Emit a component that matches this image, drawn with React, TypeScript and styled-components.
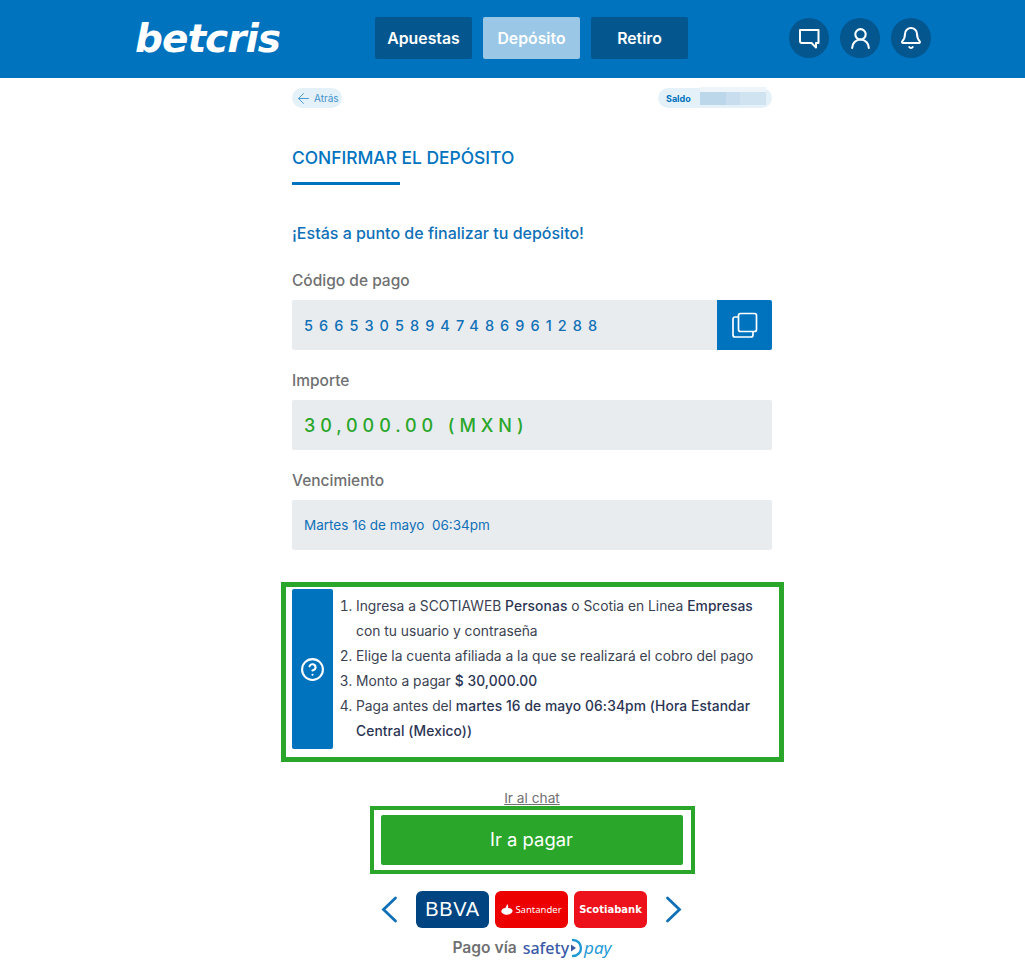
import React from "react";
import styled, { createGlobalStyle } from "styled-components";
import { ArrowLeft, CircleHelp, Bell, UserRound } from "lucide-react";

const GlobalStyle = createGlobalStyle`
  html, body { margin: 0; padding: 0; background: #fff; }
  body { font-family: Inter, "Noto Sans", sans-serif; color: #2b3553; }
`;

const Header = styled.header`
  height: 78px;
  box-sizing: border-box;
  padding-bottom: 2px;
  background: #0073bf;
  display: grid;
  grid-template-columns: 375px 313px 1fr;
  align-items: center;
`;

const Logo = styled.div`
  justify-self: end;
  margin-right: 95px;
  color: #fff;
  font-family: "DejaVu Sans", sans-serif;
  font-size: 39px;
  font-weight: 700;
  font-style: italic;
  letter-spacing: -1px;
  line-height: 1;
`;

const Nav = styled.nav`
  display: flex;
  gap: 11px;
`;

const NavButton = styled.button<{ $active?: boolean }>`
  width: 97px;
  height: 42px;
  border: 0;
  border-radius: 2px;
  background: ${(p) => (p.$active ? "#99c7e5" : "#04568f")};
  color: #fff;
  font: 600 15.8px Inter, sans-serif;
  padding: 0;
`;

const HeaderIcons = styled.div`
  display: flex;
  gap: 11px;
  margin-left: 101px;
`;

const Round = styled.div`
  width: 40px;
  height: 40px;
  border-radius: 50%;
  background: #04568f;
  color: #fff;
  display: flex;
  align-items: center;
  justify-content: center;
`;

const Main = styled.main`
  width: 480px;
  margin: 0 auto 0 292px;
  display: flex;
  flex-direction: column;
`;

const TopRow = styled.div`
  display: flex;
  justify-content: space-between;
  margin-top: 10px;
`;

const Pill = styled.div`
  height: 20px;
  border-radius: 10px;
  background: #e5f1f9;
  display: flex;
  align-items: center;
`;

const BackPill = styled(Pill)`
  width: 50px;
  padding-left: 3px;
  box-sizing: border-box;
  gap: 2px;
  font-size: 10px;
  color: #3d93cd;
`;

const SaldoPill = styled(Pill)`
  width: 114px;
  padding-left: 8px;
  box-sizing: border-box;
  gap: 9px;
  font-size: 9px;
  color: #0073bf;
  font-weight: 700;
`;

const Blur = styled.div`
  width: 66px;
  height: 13px;
  background: linear-gradient(90deg, #bcd6ea 0 40%, #c8deee 40% 60%, #d0e3f1 60%);
  box-shadow: 0 -5px 0 #eef5fa;
`;

const Title = styled.h1`
  margin: 40px 0 0;
  font-size: 17.4px;
  line-height: 20px;
  font-weight: 500;
  color: #0073bf;
`;

const TitleRule = styled.div`
  width: 108px;
  height: 3px;
  margin-top: 14px;
  background: #0073bf;
`;

const Intro = styled.p`
  margin: 38px 0 0;
  font-size: 16px;
  line-height: 20px;
  font-weight: 500;
  color: #0f70b7;
`;

const Label = styled.div<{ $first?: boolean }>`
  margin-top: ${(p) => (p.$first ? 28 : 21)}px;
  font-size: 15.5px;
  line-height: 20px;
  font-weight: 500;
  color: #6f7072;
`;

const Field = styled.div`
  margin-top: 9px;
  height: 50px;
  border-radius: 2px;
  background: #e9ecef;
  display: flex;
  align-items: center;
  justify-content: space-between;
  padding-left: 12px;
  overflow: hidden;
`;

const Code = styled.span`
  font-size: 14.5px;
  font-weight: 500;
  letter-spacing: 6.05px;
  color: #0f70b7;
`;

const Amount = styled.span`
  font-size: 18px;
  font-weight: 500;
  letter-spacing: 4.9px;
  color: #2aa72b;
`;

const DateText = styled.span`
  font-size: 13.5px;
  color: #0f70b7;
  white-space: pre;
`;

const CopyButton = styled.button`
  width: 55px;
  height: 50px;
  border: 0;
  background: #0073bf;
  display: flex;
  align-items: center;
  justify-content: center;
  padding: 0;
`;

const HelpBox = styled.section`
  margin: 32px 0 0 -11px;
  width: 503px;
  height: 180px;
  box-sizing: border-box;
  border: 5px solid #2aa72b;
  padding: 2px 0 0 6px;
  display: flex;
  gap: 7px;
`;

const HelpTab = styled.div`
  width: 41px;
  height: 160px;
  flex: none;
  border-radius: 2px;
  background: #0073bf;
  color: #fff;
  display: flex;
  align-items: center;
  justify-content: center;
`;

const Steps = styled.ol`
  margin: 5px 0 0;
  padding: 0 0 0 16px;
  font-size: 13.8px;
  line-height: 25px;
  color: #3b4252;
  b { font-weight: 500; letter-spacing: 0.1px; color: #2b3553; }
`;

const ChatLink = styled.a`
  display: block;
  margin-top: 27px;
  text-align: center;
  font-size: 13.7px;
  line-height: 18px;
  color: #6f7072;
  text-decoration: underline;
`;

const PayOutline = styled.div`
  align-self: center;
  width: 325px;
  height: 68px;
  margin-top: -1px;
  box-sizing: border-box;
  border: 4px solid #2aa72b;
  padding: 5px 8px 5px 7px;
`;

const PayButton = styled.button`
  width: 100%;
  height: 50px;
  border: 0;
  border-radius: 2px;
  padding: 0 0 2px;
  background: #2aa72b;
  color: #fff;
  font: 400 18.4px Inter, sans-serif;
`;

const BankRow = styled.div`
  margin-top: 17px;
  margin-left: -1px;
  display: flex;
  justify-content: center;
  align-items: center;
  gap: 6px;
`;

const Bank = styled.div<{ $bg: string }>`
  width: 73px;
  height: 37px;
  border-radius: 6px;
  background: ${(p) => p.$bg};
  color: #fff;
  display: flex;
  align-items: center;
  justify-content: center;
  white-space: nowrap;
`;

const BbvaText = styled.span`
  font: 400 20px "Liberation Sans", sans-serif;
  letter-spacing: 0.6px;
`;

const SantanderText = styled.span`
  font: 400 9.5px "Noto Sans", sans-serif;
  display: flex;
  align-items: center;
  gap: 2px;
`;

const ScotiaText = styled.span`
  font: 700 10px "DejaVu Sans", sans-serif;
`;

const Arrow = styled.div<{ $right?: boolean }>`
  width: 29px;
  display: flex;
  justify-content: ${(p) => (p.$right ? "flex-end" : "flex-start")};
`;

const PagoRow = styled.div`
  margin-top: 8px;
  display: flex;
  justify-content: center;
  align-items: center;
  gap: 6px;
  font-size: 15.6px;
  line-height: 22px;
  font-weight: 600;
  color: #6f7072;
`;

const Safety = styled.span`
  display: flex;
  align-items: center;
  font: 500 16px "Noto Sans", sans-serif;
  color: #3a5aa5;
`;

const Pay = styled.span`
  font-size: 17px;
  font-style: italic;
  font-weight: 400;
  color: #1f9ad6;
`;

const ChatIcon = () => (
  <svg width="24" height="24" viewBox="0 0 24 24" fill="none" stroke="#fff" strokeWidth="2" strokeLinejoin="round">
    <path d="M3 4h18.500v13h-2.500v4.500L14.500 17H5a2 2 0 0 1-2-2z" />
  </svg>
);

const CopyIcon = () => (
  <svg width="26" height="26" viewBox="0 0 26 26" fill="none" stroke="#fff" strokeWidth="1.7">
    <rect x="6.500" y="1.500" width="18" height="18" rx="2" />
    <path d="M6.500 5H3a2 2 0 0 0-2 2v16a2 2 0 0 0 2 2h16a2 2 0 0 0 2-2v-3.500" />
  </svg>
);

const Flame = () => (
  <svg width="12" height="11" viewBox="0 0 11 10" fill="#fff">
    <path d="M5.600 0c.9 1.400 1.500 2.300.6 3.800 1.500-.4 3.500.3 4.300 2 .7 2-2.300 4-5 4S-.5 8 .5 5.800C1.300 4.300 2.800 3.600 4 3.700 4.700 2.600 5.200 1.400 5.600 0z" />
  </svg>
);

const SafetyMark = () => (
  <svg width="15" height="20" viewBox="0 0 15 20" fill="none">
    <path d="M4 2a8 8 0 0 1 0 16" stroke="#1f9ad6" strokeWidth="2.400" strokeLinecap="round" />
    <path d="M2 6.500l5 3.500-5 3.500z" fill="#3a5aa5" />
  </svg>
);

const Chevron = ({ right }: { right?: boolean }) => (
  <svg width="17" height="27" viewBox="0 0 17 27" fill="none" stroke="#0f70b7" strokeWidth="2.800" strokeLinecap="round">
    <path d={right ? "M2.500 2l12 11.500-12 11.500" : "M14.500 2l-12 11.500 12 11.500"} />
  </svg>
);

export default function App() {
  return (
    <>
      <GlobalStyle />
      <Header>
        <Logo>betcris</Logo>
        <Nav>
          <NavButton>Apuestas</NavButton>
          <NavButton $active>Depósito</NavButton>
          <NavButton>Retiro</NavButton>
        </Nav>
        <HeaderIcons>
          <Round><ChatIcon /></Round>
          <Round><UserRound size={25} strokeWidth={2} /></Round>
          <Round><Bell size={24} strokeWidth={2} /></Round>
        </HeaderIcons>
      </Header>
      <Main>
        <TopRow>
          <BackPill>
            <ArrowLeft size={17} strokeWidth={1.300} />
            Atrás
          </BackPill>
          <SaldoPill>
            Saldo
            <Blur />
          </SaldoPill>
        </TopRow>
        <Title>CONFIRMAR EL DEPÓSITO</Title>
        <TitleRule />
        <Intro>¡Estás a punto de finalizar tu depósito!</Intro>
        <Label $first>Código de pago</Label>
        <Field>
          <Code>56653058947486961288</Code>
          <CopyButton><CopyIcon /></CopyButton>
        </Field>
        <Label>Importe</Label>
        <Field>
          <Amount>30,000.00 (MXN)</Amount>
        </Field>
        <Label>Vencimiento</Label>
        <Field>
          <DateText>{"Martes 16 de mayo  06:34pm"}</DateText>
        </Field>
        <HelpBox>
          <HelpTab><CircleHelp size={25} strokeWidth={2} /></HelpTab>
          <Steps>
            <li>Ingresa a SCOTIAWEB <b>Personas</b> o Scotia en Linea <b>Empresas</b> con tu usuario y contraseña</li>
            <li>Elige la cuenta afiliada a la que se realizará el cobro del pago</li>
            <li>Monto a pagar <b>$ 30,000.00</b></li>
            <li>Paga antes del <b>martes 16 de mayo 06:34pm (Hora Estandar Central (Mexico))</b></li>
          </Steps>
        </HelpBox>
        <ChatLink href="#">Ir al chat</ChatLink>
        <PayOutline>
          <PayButton>Ir a pagar</PayButton>
        </PayOutline>
        <BankRow>
          <Arrow><Chevron /></Arrow>
          <Bank $bg="#004481"><BbvaText>BBVA</BbvaText></Bank>
          <Bank $bg="#ec0000"><SantanderText><Flame />Santander</SantanderText></Bank>
          <Bank $bg="#ec111a"><ScotiaText>Scotiabank</ScotiaText></Bank>
          <Arrow $right><Chevron right /></Arrow>
        </BankRow>
        <PagoRow>
          Pago vía
          <Safety>safety<SafetyMark /><Pay>pay</Pay></Safety>
        </PagoRow>
      </Main>
    </>
  );
}
